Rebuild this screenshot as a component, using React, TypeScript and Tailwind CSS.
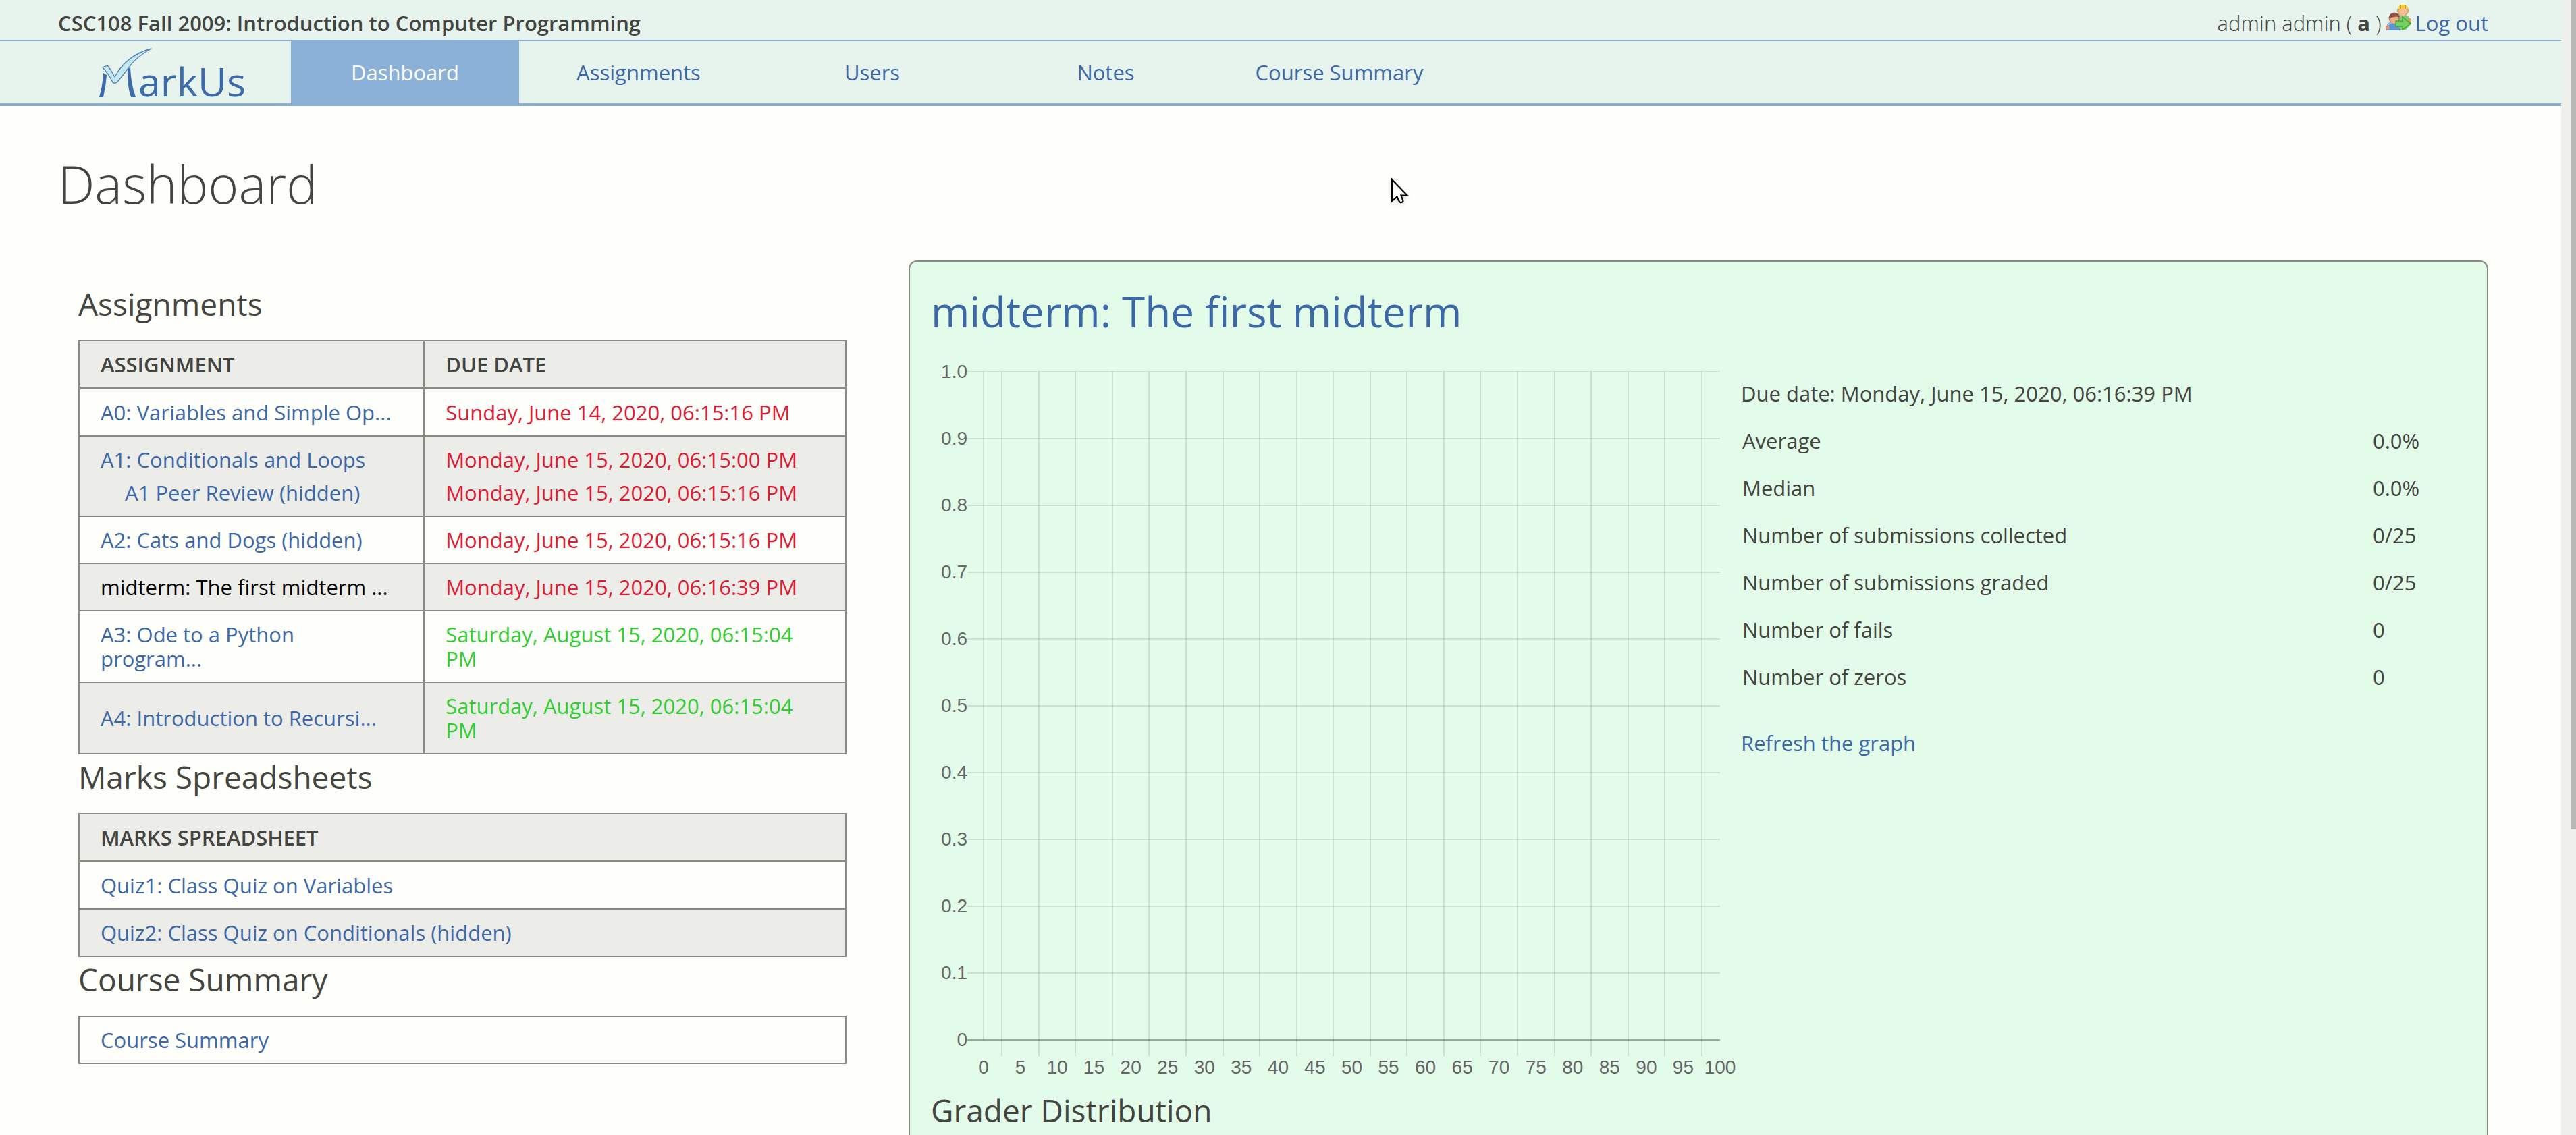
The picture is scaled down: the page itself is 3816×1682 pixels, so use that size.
import type { ReactNode } from 'react';

const NAV = ['Dashboard', 'Assignments', 'Users', 'Notes', 'Course Summary'];

const STATS: [string, string][] = [
  ['Average', '0.0%'],
  ['Median', '0.0%'],
  ['Number of submissions collected', '0/25'],
  ['Number of submissions graded', '0/25'],
  ['Number of fails', '0'],
  ['Number of zeros', '0'],
];

type Assignment = {
  name: string;
  due: string;
  state: 'past' | 'future';
  current?: boolean;
  child?: { name: string; due: string };
};

const ASSIGNMENTS: Assignment[] = [
  { name: 'A0: Variables and Simple Op...', due: 'Sunday, June 14, 2020, 06:15:16 PM', state: 'past' },
  {
    name: 'A1: Conditionals and Loops',
    due: 'Monday, June 15, 2020, 06:15:00 PM',
    state: 'past',
    child: { name: 'A1 Peer Review (hidden)', due: 'Monday, June 15, 2020, 06:15:16 PM' },
  },
  { name: 'A2: Cats and Dogs (hidden)', due: 'Monday, June 15, 2020, 06:15:16 PM', state: 'past' },
  { name: 'midterm: The first midterm ...', due: 'Monday, June 15, 2020, 06:16:39 PM', state: 'past', current: true },
  { name: 'A3: Ode to a Python program...', due: 'Saturday, August 15, 2020, 06:15:04 PM', state: 'future' },
  { name: 'A4: Introduction to Recursi...', due: 'Saturday, August 15, 2020, 06:15:04 PM', state: 'future' },
];

function Logo() {
  return (
    <svg viewBox="0 0 220 76" className="h-[76px] w-[220px] overflow-visible" role="img" aria-label="MarkUs">
      <path d="M8 39 Q11 41 13 42 Q12 58 8 75 L2 75 Q7 58 8 39Z" fill="#3d6aaa" />
      <path d="M44 33 L48 31 Q49 56 56 75 L49 75 Q43 58 44 33Z" fill="#3d6aaa" />
      <path
        d="M7 31 Q11 29 14 28 Q20 35 25 45 Q42 13 79 3 Q56 16 45 32 Q37 43 29 52 Q25 56 22 53 Q17 42 7 31Z"
        fill="#c4e7f0"
        stroke="#5583b8"
        strokeWidth="1.3"
        strokeLinejoin="round"
      />
      <text x="60" y="74" fontSize="59" fill="#3d6aaa" className="font-['Open_Sans',sans-serif]">
        arkUs
      </text>
    </svg>
  );
}

function GroupIcon() {
  return (
    <svg viewBox="0 0 38 38" className="h-[38px] w-[38px] shrink-0" aria-hidden="true">
      <path d="M16 37 V24 Q17 15 25 15 Q36 15 37 24 L38 28 L30 37Z" fill="#7fca78" />
      <circle cx="36" cy="23" r="3" fill="#e0a070" />
      <circle cx="25.500" cy="8.500" r="8.500" fill="#dba06c" />
      <circle cx="25.500" cy="10" r="6" fill="#f6bd98" />
      <path d="M18 6 Q19 0 25.500 0 Q32 0 33 6Z" fill="#e9e21c" />
      <path d="M22 1v5M25.500 0v6M29 1v5" stroke="#d0602c" strokeWidth="1.200" />
      <path d="M1 38 Q0 26 10 25 Q20 25 21 38Z" fill="#5e93d2" />
      <path d="M3 31 Q5 27 10 27" stroke="#9cc3ec" strokeWidth="2" fill="none" />
      <circle cx="2.500" cy="34" r="3" fill="#e8946a" />
      <circle cx="13" cy="20" r="8.500" fill="#b0805f" />
      <circle cx="13" cy="22" r="6" fill="#f3b08a" />
      <path d="M5 19 Q6 12 13 12 Q20 12 21 18 Q17 17 13 18 Q9 19 5 19Z" fill="#8a5540" />
      <path d="M15 24 H25 V18 L37 28 L25 37 V32 H15Z" fill="#74d060" stroke="#3faa33" strokeWidth="1.500" />
    </svg>
  );
}

function Cursor() {
  return (
    <svg
      viewBox="0 0 28 44"
      className="pointer-events-none absolute left-[2059px] top-[262px] h-[44px] w-[28px] drop-shadow-md"
      aria-hidden="true"
    >
      <path
        d="M3 4 V36 L10.500 29.500 L14 37 Q17 40 19.500 36 L16.500 27.500 H25.500Z"
        fill="#fbfbf9"
        stroke="#000"
        strokeWidth="2.200"
      />
    </svg>
  );
}

function SectionTitle({ children }: { children: ReactNode }) {
  return <h3 className="mb-5 text-[46px] leading-[67px]">{children}</h3>;
}

const tableCls = 'w-full border-collapse border-2 border-[#888a83] text-left text-[31px] leading-9';
const thCls =
  'border-r-2 border-b-4 border-[#888a83] bg-[#ecede9] px-[31px] pt-4 pb-[15px] font-semibold uppercase';
const tdCls = 'border-2 border-[#888a83] px-[31px] py-4';
const linkCls = 'text-[#3d68a8]';

function AssignmentsTable() {
  return (
    <table className={tableCls}>
      <thead>
        <tr>
          <th className={`w-[45%] ${thCls}`}>Assignment</th>
          <th className={thCls}>Due date</th>
        </tr>
      </thead>
      <tbody>
        {ASSIGNMENTS.map((a) => (
          <tr key={a.name} className="even:bg-[#ecede9]">
            <td className="border-2 border-[#888a83] py-4 pr-10 pl-[31px]">
              <a href="#" className={a.current ? 'text-black' : linkCls}>
                {a.name}
              </a>
              {a.child && (
                <div className="mt-[13px] pl-9">
                  <a href="#" className={linkCls}>
                    {a.child.name}
                  </a>
                </div>
              )}
            </td>
            <td className={`${tdCls} ${a.state === 'past' ? 'text-[#dc1c34]' : 'text-[#32cd32]'}`}>
              {a.due}
              {a.child && <div className="mt-[13px]">{a.child.due}</div>}
            </td>
          </tr>
        ))}
      </tbody>
    </table>
  );
}

function DistributionChart() {
  const left = 78;
  const tick = 54;
  const top = 12;
  const bottom = 1002;
  const step = 1091 / 20;
  const right = left + 1091;
  const rows = Array.from({ length: 11 }, (_, i) => i);
  const cols = Array.from({ length: 21 }, (_, i) => i);
  return (
    <svg
      viewBox="0 0 1200 1073"
      className="w-full overflow-visible font-['Liberation_Sans',Arial,sans-serif]"
      role="img"
      aria-label="Grade distribution"
    >
      <g stroke="#000" strokeOpacity="0.1" strokeWidth="2" shapeRendering="crispEdges">
        {rows.map((i) => (
          <line key={i} x1={tick} x2={right} y1={top + i * 99} y2={top + i * 99} />
        ))}
        <line x1={tick} x2={right} y1={bottom} y2={bottom} strokeOpacity="0.25" />
        <line x1={left} x2={left} y1={top} y2={bottom} />
        {cols.slice(0, 20).map((i) => (
          <line
            key={i}
            x1={Math.round(left + step * (i + 0.5))}
            x2={Math.round(left + step * (i + 0.5))}
            y1={top}
            y2={bottom + 24}
          />
        ))}
      </g>
      <g fill="#666" fontSize="28">
        {rows.map((i) => (
          <text key={i} x={tick} y={top + i * 99 + 9} textAnchor="end">
            {i === 10 ? '0' : i === 0 ? '1.0' : `0.${10 - i}`}
          </text>
        ))}
        {cols.map((i) => (
          <text key={i} x={left + step * i} y={bottom + 50} textAnchor="middle">
            {i * 5}
          </text>
        ))}
      </g>
    </svg>
  );
}

export default function App() {
  return (
    <div className="relative flex h-screen overflow-hidden bg-[#fefffb] font-['Open_Sans',sans-serif] text-[31px] leading-9 text-[#444440]">
      <div className="min-w-0 flex-1 overflow-hidden">
        <header className="border-b-4 border-[#8bb0d3] bg-[#e7f4ee]">
          <div className="flex h-[61px] items-center justify-between border-b-2 border-[#8bb0d3] pr-[108px] pl-[86px] pt-2">
            <p className="font-semibold">CSC108 Fall 2009: Introduction to Computer Programming</p>
            <div className="flex items-center gap-1.5 font-light">
              <span>
                admin admin ( <b className="font-bold">a</b> )
              </span>
              <span className="-mt-4">
                <GroupIcon />
              </span>
              <a href="#" className="font-normal text-[#3d68a8]">
                Log out
              </a>
            </div>
          </div>
          <nav className="flex h-[92px] items-center gap-2">
            <a href="#" className="flex w-[423px] shrink-0 items-center pl-[145px]">
              <Logo />
            </a>
            {NAV.map((item, i) => (
              <a
                key={item}
                href="#"
                className={
                  i === 0
                    ? 'flex h-full w-[338px] items-center justify-center bg-[#8bb1d8] text-white'
                    : 'flex h-full w-[338px] items-center justify-center text-[#3d68a8]'
                }
              >
                {item}
              </a>
            ))}
          </nav>
        </header>

        <main className="pr-[108px] pl-[86px]">
          <h1 className="pt-[58px] pb-[55px] text-[77px] leading-[116px] font-light">Dashboard</h1>
          <div className="flex items-start">
            <section className="w-[35%] pt-[31px] pr-[92px] pl-[30px]">
              <SectionTitle>Assignments</SectionTitle>
              <AssignmentsTable />
              <SectionTitle>Marks Spreadsheets</SectionTitle>
              <table className={tableCls}>
                <thead>
                  <tr>
                    <th className={thCls}>Marks Spreadsheet</th>
                  </tr>
                </thead>
                <tbody>
                  <tr>
                    <td className={tdCls}>
                      <a href="#" className={linkCls}>
                        Quiz1: Class Quiz on Variables
                      </a>
                    </td>
                  </tr>
                  <tr className="bg-[#ecede9]">
                    <td className={tdCls}>
                      <a href="#" className={linkCls}>
                        Quiz2: Class Quiz on Conditionals (hidden)
                      </a>
                    </td>
                  </tr>
                </tbody>
              </table>
              <SectionTitle>Course Summary</SectionTitle>
              <table className={tableCls}>
                <tbody>
                  <tr>
                    <td className={tdCls}>
                      <a href="#" className={linkCls}>
                        Course Summary
                      </a>
                    </td>
                  </tr>
                </tbody>
              </table>
            </section>

            <section className="w-[65%] rounded-xl border-2 border-[#888a83] bg-[#e2fce9] px-[31px] pt-[27px] pb-24">
              <h2 className="mb-8 text-[62px] leading-[92px]">
                <a href="#" className={linkCls}>
                  midterm: The first midterm
                </a>
              </h2>
              <div className="grid grid-cols-[1200fr_1074fr]">
                <DistributionChart />
                <div className="pt-[26px]">
                  <p>Due date: Monday, June 15, 2020, 06:16:39 PM</p>
                  <dl className="mt-[34px] grid grid-cols-[934fr_138fr] gap-y-[34px] pl-0.5">
                    {STATS.map(([label, value]) => (
                      <div key={label} className="contents">
                        <dt>{label}</dt>
                        <dd>{value}</dd>
                      </div>
                    ))}
                  </dl>
                  <a href="#" className={`mt-[62px] inline-block ${linkCls}`}>
                    Refresh the graph
                  </a>
                </div>
              </div>
              <SectionTitle>Grader Distribution</SectionTitle>
            </section>
          </div>
        </main>
      </div>
      <div className="flex w-[22px] shrink-0 justify-end bg-[#eff0ec]" aria-hidden="true">
        <div className="h-[73%] w-2 bg-[#b7b8b5]" />
      </div>
      <Cursor />
    </div>
  );
}
